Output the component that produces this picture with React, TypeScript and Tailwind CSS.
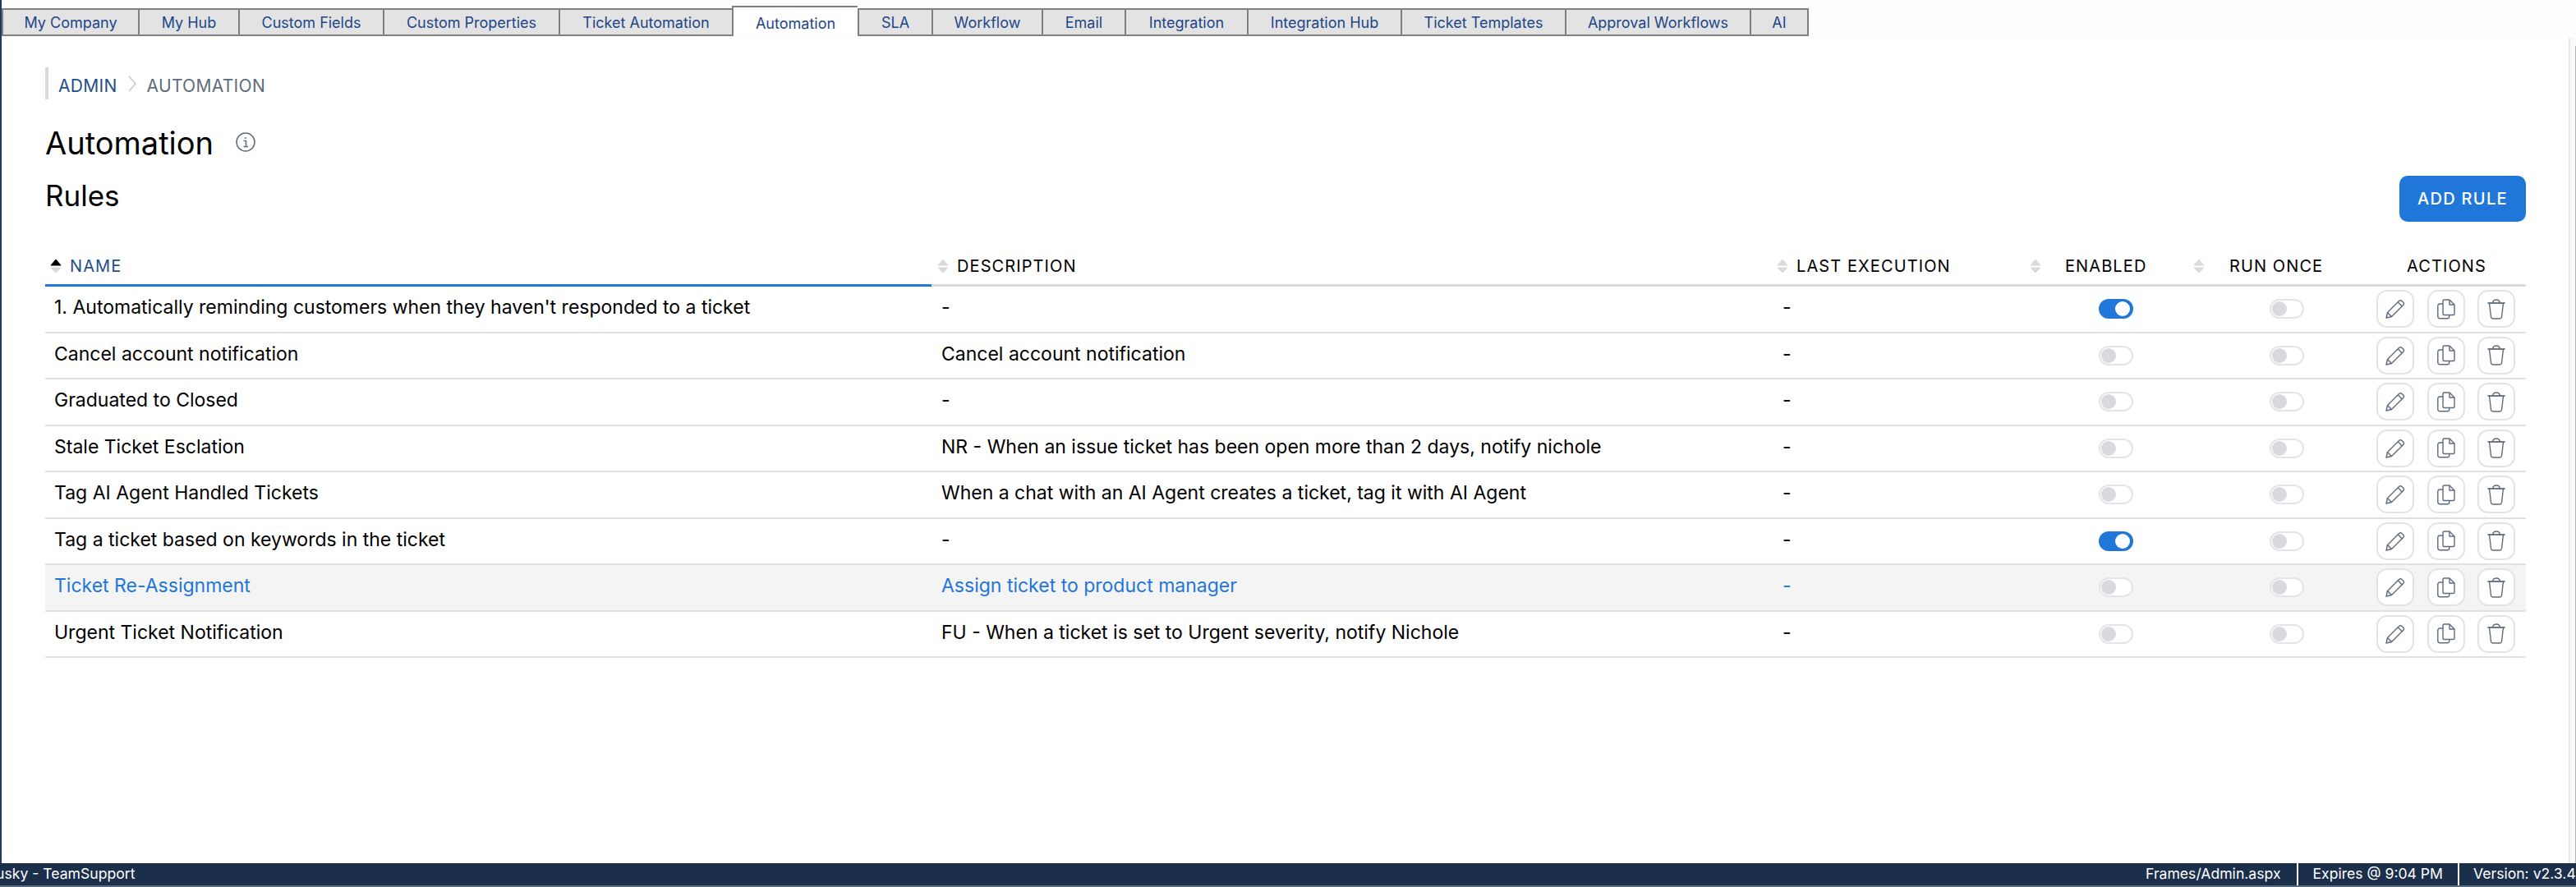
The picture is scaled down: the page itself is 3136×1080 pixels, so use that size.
const TABS = [
  { label: 'My Company', width: 'w-[166px]' },
  { label: 'My Hub', width: 'w-[122px]' },
  { label: 'Custom Fields', width: 'w-[176px]' },
  { label: 'Custom Properties', width: 'w-[214px]' },
  { label: 'Ticket Automation', width: 'w-[211px]' },
  { label: 'Automation', width: 'w-[153px]', active: true },
  { label: 'SLA', width: 'w-[90px]' },
  { label: 'Workflow', width: 'w-[134px]' },
  { label: 'Email', width: 'w-[101px]' },
  { label: 'Integration', width: 'w-[149px]' },
  { label: 'Integration Hub', width: 'w-[187px]' },
  { label: 'Ticket Templates', width: 'w-[200px]' },
  { label: 'Approval Workflows', width: 'w-[225px]' },
  { label: 'AI', width: 'w-[72px] border-r-2' },
]

const RULES = [
  { name: "1. Automatically reminding customers when they haven't responded to a ticket", description: '-', enabled: true },
  { name: 'Cancel account notification', description: 'Cancel account notification' },
  { name: 'Graduated to Closed', description: '-' },
  { name: 'Stale Ticket Esclation', description: 'NR - When an issue ticket has been open more than 2 days, notify nichole' },
  { name: 'Tag AI Agent Handled Tickets', description: 'When a chat with an AI Agent creates a ticket, tag it with AI Agent' },
  { name: 'Tag a ticket based on keywords in the ticket', description: '-', enabled: true },
  { name: 'Ticket Re-Assignment', description: 'Assign ticket to product manager', hover: true },
  { name: 'Urgent Ticket Notification', description: 'FU - When a ticket is set to Urgent severity, notify Nichole' },
]

const COLS = 'grid grid-cols-[1079px_1023px_308px_199px_216px_195px]'

function SortIcon({ active }: { active?: boolean }) {
  return (
    <svg width="14" height="18" viewBox="0 0 14 18" className="shrink-0">
      <path d="M7 1 L13 8 H1 Z" fill={active ? '#000000' : '#d8dade'} stroke={active ? '#000000' : '#d8dade'} strokeLinejoin="round" />
      <path d="M7 17 L13 11 H1 Z" fill="#d8dade" stroke="#d8dade" strokeLinejoin="round" />
    </svg>
  )
}

function Toggle({ on }: { on?: boolean }) {
  if (on) {
    return (
      <div className="flex h-[24px] w-[42px] items-center justify-end rounded-full bg-[#2176d9] pr-[4px]">
        <div className="h-[18px] w-[18px] rounded-full bg-white" />
      </div>
    )
  }
  return (
    <div className="flex h-[24px] w-[42px] items-center rounded-full border-2 border-[#e3e4e8] bg-white pl-[1px]">
      <div className="h-[18px] w-[18px] rounded-full bg-[#d8dade]" />
    </div>
  )
}

function ActionButton({ children }: { children: React.ReactNode }) {
  return (
    <button className="flex h-[46px] w-[46px] items-center justify-center rounded-[13px] border-2 border-[#e2e3e7] bg-white">
      {children}
    </button>
  )
}

function PencilIcon() {
  return (
    <svg width="24" height="24" viewBox="0 0 24 24" fill="none" stroke="#5f6b7a" strokeWidth="1.4" strokeLinejoin="round">
      <path d="M1 23 L2.5 16.5 L16.5 2.5 Q18.2 1 19.8 2.2 L22 4.4 Q23.2 6 21.6 7.6 L7.5 21.5 Z" />
      <path d="M15.2 3.8 L20.4 9" />
      <path d="M2.5 16.5 L7.5 21.5" />
    </svg>
  )
}

function CopyIcon() {
  return (
    <svg width="22" height="25" viewBox="0 0 22 25" fill="none" stroke="#5f6b7a" strokeWidth="1.4" strokeLinejoin="round">
      <path d="M7 2.5 a1.5 1.5 0 0 1 1.5 -1.5 H15 L21 7 V18 a1.5 1.5 0 0 1 -1.5 1.5 H8.5 a1.5 1.5 0 0 1 -1.5 -1.5 Z" />
      <path d="M15 1 V7 H21" />
      <path d="M7 6 H3 a2.2 2.2 0 0 0 -2.2 2.2 V21.5 A2.2 2.2 0 0 0 3 23.7 H12.5 a2.2 2.2 0 0 0 2.2 -2.2 V19.5" />
    </svg>
  )
}

function TrashIcon() {
  return (
    <svg width="22" height="25" viewBox="0 0 22 25" fill="none" stroke="#5f6b7a" strokeWidth="1.4" strokeLinejoin="round">
      <path d="M0.5 5 H21.5" strokeWidth="1.8" />
      <path d="M6.5 5 Q7 1 11 1 Q15 1 15.5 5" />
      <path d="M2.5 5 L4.5 22 Q4.8 24 6.8 24 H15.2 Q17.2 24 17.5 22 L19.5 5" />
    </svg>
  )
}

function InfoIcon() {
  return (
    <svg width="24" height="24" viewBox="0 0 24 24" fill="none" stroke="#5f6b7a" strokeWidth="1.5">
      <circle cx="12" cy="12" r="11" />
      <path d="M9.5 10.5 H12.5 V17.5 M9.5 17.5 H15" />
      <circle cx="12" cy="7" r="1" fill="#5f6b7a" stroke="none" />
    </svg>
  )
}

export default function App() {
  return (
    <div className="flex h-[1080px] w-[3136px] flex-col overflow-hidden bg-white [font-family:Inter,sans-serif]">
      <div className="flex min-h-0 flex-1">
        <div className="w-[2px] shrink-0 bg-[#1f3a5c]" />
        <div className="flex min-w-0 flex-1 flex-col">
          <div className="flex h-[46px] shrink-0 items-end bg-[#fcfefd] pb-[2px]">
            {TABS.map((tab) => (
              <div
                key={tab.label}
                className={`flex items-center justify-center border-l-2 border-t-2 border-[#808080] text-[18px] text-[#1d4689] ${tab.width} ${
                  tab.active ? 'h-[37px] bg-white pt-[3px]' : 'h-[34px] border-b-2 bg-[#e3e3e3]'
                }`}
              >
                {tab.label}
              </div>
            ))}
          </div>

          <div className="flex min-h-0 flex-1">
            <div className="min-w-0 flex-1 pl-[53px] pt-[36px]">
              <div className="flex h-[39px] items-center border-l-4 border-[#d8dade] pl-[12px] pt-[7px] text-[21px] tracking-[0.3px]">
                <span className="text-[#1f4e8c]">ADMIN</span>
                <svg width="10" height="20" viewBox="0 0 10 20" fill="none" stroke="#c4c6cc" strokeWidth="1.5" className="ml-[13px] mr-[13px] -mt-[6px]">
                  <path d="M1 1 L9 10 L1 19" />
                </svg>
                <span className="text-[#5f6b7a]">AUTOMATION</span>
              </div>

              <div className="mt-[31px] flex h-[44px] items-center">
                <h1 className="text-[38px] font-normal leading-[44px] text-black">Automation</h1>
                <div className="ml-[27px] -mt-[2px]">
                  <InfoIcon />
                </div>
              </div>

              <div className="mt-[16px] flex h-[60px] w-[3020px] items-start justify-between">
                <h2 className="mt-[4px] text-[35px] font-normal leading-[44px] text-black">Rules</h2>
                <button className="mt-[2px] h-[56px] w-[154px] rounded-[10px] bg-[#2176d9] text-[20px] font-medium tracking-[1.3px] text-white">
                  ADD RULE
                </button>
              </div>

              <div className="w-[3020px]">
                <div className={`${COLS} h-[77px] items-center border-b-[3px] border-[#d8dade] text-[20px] tracking-[1.1px] text-black`}>
                  <div className="relative flex h-full items-center gap-[10px] pl-[6px] pt-[29px] text-[#1f4e8c]">
                    <SortIcon active />
                    NAME
                    <div className="absolute bottom-[-3px] left-0 h-[3px] w-full bg-[#2176d9]" />
                  </div>
                  <div className="flex h-full items-center gap-[10px] pl-[7px] pt-[29px]">
                    <SortIcon />
                    DESCRIPTION
                  </div>
                  <div className="flex h-full items-center gap-[10px] pl-[6px] pt-[29px]">
                    <SortIcon />
                    LAST EXECUTION
                  </div>
                  <div className="flex h-full items-center gap-[29px] pl-[6px] pt-[29px]">
                    <SortIcon />
                    ENABLED
                  </div>
                  <div className="flex h-full items-center gap-[30px] pl-[6px] pt-[29px]">
                    <SortIcon />
                    RUN ONCE
                  </div>
                  <div className="flex h-full items-center pl-[50px] pt-[29px]">ACTIONS</div>
                </div>

                {RULES.map((rule) => (
                  <div
                    key={rule.name}
                    className={`${COLS} h-[56.5px] items-center border-b-2 border-[#dfe0e4] text-[23px] ${
                      rule.hover ? 'bg-[#f4f4f4] text-[#2176d9]' : 'text-black'
                    }`}
                  >
                    <div className="-mt-[4px] pl-[11px]">{rule.name}</div>
                    <div className="-mt-[4px] pl-[12px]">{rule.description}</div>
                    <div className="-mt-[4px] pl-[13px]">-</div>
                    <div className="pl-[90px]">
                      <Toggle on={rule.enabled} />
                    </div>
                    <div className="pl-[99px]">
                      <Toggle />
                    </div>
                    <div className="flex gap-[15.5px] pl-[13px]">
                      <ActionButton>
                        <PencilIcon />
                      </ActionButton>
                      <ActionButton>
                        <CopyIcon />
                      </ActionButton>
                      <ActionButton>
                        <TrashIcon />
                      </ActionButton>
                    </div>
                  </div>
                ))}
              </div>
            </div>

            <div className="flex w-[9px] shrink-0 justify-end border-l-2 border-[#e8e8e8] bg-[#fafafa] pt-[10px]">
              <div className="h-full w-[1px] bg-[#b5b5b5]" />
            </div>
          </div>
        </div>
      </div>

      <div className="flex h-[29px] shrink-0 items-center justify-between overflow-hidden border-b-2 border-[#5b6a7c] bg-[#1b2e4a] text-[17.6px] text-white">
        <span className="-ml-[18px] whitespace-nowrap">Husky - TeamSupport</span>
        <div className="flex h-full items-center whitespace-nowrap">
          <span className="pr-[19px]">Frames/Admin.aspx</span>
          <span className="border-l-2 border-white px-[18px]">Expires @ 9:04 PM</span>
          <span className="w-[144px] border-l-2 border-white pl-[17px]">Version: v2.3.4</span>
        </div>
      </div>
    </div>
  )
}
